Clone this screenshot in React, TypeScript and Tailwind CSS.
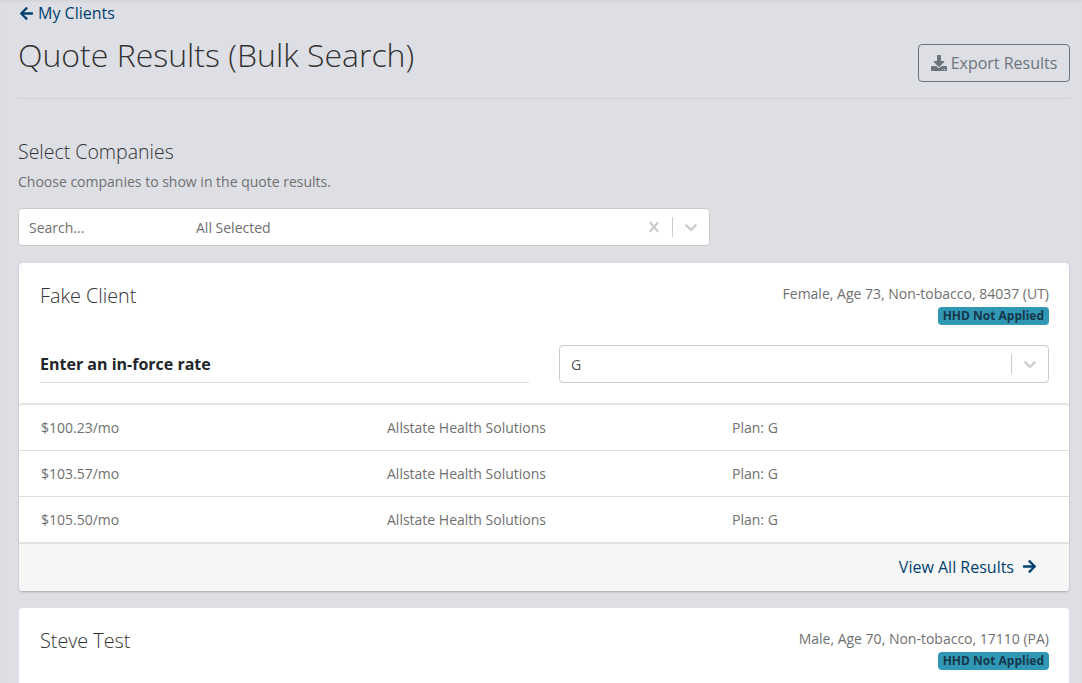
import React from "react";

const ArrowLeft = ({ className }: { className: string }) => (
  <svg viewBox="0 0 448 512" className={className} fill="currentColor">
    <path d="M257.5 445.1l-22.2 22.2c-9.4 9.4-24.6 9.4-33.9 0L7 273c-9.4-9.4-9.4-24.6 0-33.9L201.4 44.7c9.4-9.4 24.6-9.4 33.9 0l22.2 22.2c9.5 9.5 9.3 25-.4 34.3L136.6 216H424c13.3 0 24 10.7 24 24v32c0 13.3-10.7 24-24 24H136.6l120.5 114.8c9.8 9.3 10 24.8.4 34.3z" />
  </svg>
);
const ArrowRight = ({ className }: { className: string }) => (
  <svg viewBox="0 0 448 512" className={className} fill="currentColor">
    <path d="M190.5 66.9l22.2-22.2c9.4-9.4 24.6-9.4 33.9 0L441 239c9.4 9.4 9.4 24.6 0 33.9L246.6 467.3c-9.4 9.4-24.6 9.4-33.9 0l-22.2-22.2c-9.5-9.5-9.3-25 .4-34.3L311.4 296H24c-13.3 0-24-10.7-24-24v-32c0-13.3 10.7-24 24-24h287.4L190.9 101.2c-9.8-9.3-10-24.8-.4-34.3z" />
  </svg>
);
const Download = ({ className }: { className: string }) => (
  <svg viewBox="0 0 512 512" className={className} fill="currentColor">
    <path d="M216 0h80c13.3 0 24 10.7 24 24v168h87.7c17.8 0 26.7 21.5 14.1 34.1L269.7 378.3c-7.5 7.5-19.8 7.5-27.3 0L90.1 226.1c-12.6-12.6-3.7-34.1 14.1-34.1H192V24c0-13.3 10.7-24 24-24zm296 376v112c0 13.3-10.7 24-24 24H24c-13.3 0-24-10.7-24-24V376c0-13.3 10.7-24 24-24h146.7l49 49c20.1 20.1 52.5 20.1 72.6 0l49-49H488c13.3 0 24 10.7 24 24zm-124 88c0-11-9-20-20-20s-20 9-20 20 9 20 20 20 20-9 20-20zm64 0c0-11-9-20-20-20s-20 9-20 20 9 20 20 20 20-9 20-20z" />
  </svg>
);
const Chevron = () => (
  <svg viewBox="0 0 20 20" className="w-5 h-5 text-[#cccccc]" fill="currentColor">
    <path d="M4.516 7.548c0.436-0.446 1.043-0.481 1.576 0l3.908 3.747 3.908-3.747c0.533-0.481 1.141-0.446 1.574 0 0.436 0.445 0.408 1.197 0 1.615-0.406 0.418-4.695 4.502-4.695 4.502-0.217 0.223-0.502 0.335-0.787 0.335s-0.57-0.112-0.789-0.335c0 0-4.287-4.084-4.695-4.502s-0.436-1.17 0-1.615z" />
  </svg>
);
const Cross = () => (
  <svg viewBox="0 0 20 20" className="w-5 h-5 text-[#cccccc]" fill="currentColor">
    <path d="M14.348 14.849c-0.469 0.469-1.229 0.469-1.697 0l-2.651-3.030-2.651 3.029c-0.469 0.469-1.229 0.469-1.697 0-0.469-0.469-0.469-1.229 0-1.697l2.758-3.15-2.759-3.152c-0.469-0.469-0.469-1.228 0-1.697s1.228-0.469 1.697 0l2.652 3.031 2.651-3.031c0.469-0.469 1.228-0.469 1.697 0s0.469 1.229 0 1.697l-2.758 3.152 2.758 3.15c0.469 0.469 0.469 1.229 0 1.698z" />
  </svg>
);

const Badge = () => (
  <span className="inline-block bg-[#3097b5] text-[#16374a] text-[12px] leading-[18px] font-bold rounded-[4px] px-[5px] h-[18px]">
    HHD Not Applied
  </span>
);

const ClientHead = ({ name, info }: { name: string; info: string }) => (
  <div className="flex justify-between pl-[21px] pr-[20px] pt-[19px]">
    <div className="text-[19.8px] leading-[28px] font-light text-[#333333]">{name}</div>
    <div className="flex flex-col items-end">
      <div className="text-[14px] leading-[24px] text-[#707070] mb-[1px]">{info}</div>
      <Badge />
    </div>
  </div>
);

const rows = ["$100.23/mo", "$103.57/mo", "$105.50/mo"];

export default function App() {
  return (
    <div className="h-[683px] overflow-hidden bg-[#dddfe4] font-['Open_Sans',sans-serif] px-[18px] pt-[3px] shadow-[inset_0_2px_2px_rgba(0,0,0,0.04)]">
      <div className="w-[1052px]">
        <a className="flex items-center gap-[4px] text-[#014070] text-[16px] leading-[20px] ml-[1px]">
          <ArrowLeft className="w-[15px] h-[15px]" />
          My Clients
        </a>
        <div className="flex justify-between border-b border-[#d0d2d6] h-[76px] mb-[40px]">
          <h1 className="text-[32px] leading-[42px] text-[#333333] font-light mt-[11px]">Quote Results (Bulk Search)</h1>
          <button className="mt-[21px] w-[152px] h-[38px] border border-[#6c757d] rounded-[4px] text-[#6c757d] text-[16px] flex items-center justify-center gap-[4px]">
            <Download className="w-[16px] h-[16px]" />
            Export Results
          </button>
        </div>
        <h2 className="text-[19.5px] leading-[26px] text-[#333333] font-light">Select Companies</h2>
        <p className="text-[14px] leading-[18px] text-[#707070] mt-[8px]">Choose companies to show in the quote results.</p>
        <div className="mt-[17px] w-[692px] h-[38px] bg-white border border-[#cccccc] rounded-[4px] flex items-center text-[14px] text-[#707070]">
          <span className="ml-[10px] w-[167px]">Search...</span>
          <span className="flex-1">All Selected</span>
          <Cross />
          <span className="w-px h-[20px] bg-[#cccccc] ml-[8px]" />
          <span className="mx-[8px] flex"><Chevron /></span>
        </div>

        <div className="mt-[17px] ml-[1px] w-[1050px] bg-white rounded-[4px] shadow-[0_1px_2px_rgba(0,0,0,0.25)]">
          <ClientHead name="Fake Client" info="Female, Age 73, Non-tobacco, 84037 (UT)" />
          <div className="flex justify-between pl-[21px] pr-[20px] mt-[20px]">
            <div className="w-[489px] h-[38px] border-b border-[#dddddd] font-bold text-[16px] leading-[38px] text-[#212529]">
              Enter an in-force rate
            </div>
            <div className="w-[490px] h-[38px] border border-[#cccccc] rounded-[4px] flex items-center text-[14px] text-[#555555]">
              <span className="ml-[11px] flex-1">G</span>
              <span className="w-px h-[20px] bg-[#cccccc]" />
              <span className="mx-[8px] flex"><Chevron /></span>
            </div>
          </div>
          <div className="mt-[20px] rounded-[4px] border-t-2 border-[#e3e3e3]">
            {rows.map((r, i) => (
              <div key={r} className={`grid grid-cols-[346px_345px_1fr] pl-[22px] items-center text-[14px] text-[#707070] ${i === 2 ? "h-[47px] border-b-2 border-[#e3e3e3]" : "h-[46px] border-b border-[#dfdfdf]"}`}>
                <span>{r}</span>
                <span>Allstate Health Solutions</span>
                <span>Plan: G</span>
              </div>
            ))}
          </div>
          <div className="h-[47px] pb-[2px] bg-[#f6f6f6] rounded-b-[4px] flex items-center justify-end pr-[32px] gap-[8px] text-[#014070] text-[16px]">
            View All Results
            <ArrowRight className="w-[15px] h-[15px]" />
          </div>
        </div>

        <div className="mt-[17px] ml-[1px] w-[1050px] bg-white rounded-[4px] h-[200px]">
          <ClientHead name="Steve Test" info="Male, Age 70, Non-tobacco, 17110 (PA)" />
        </div>
      </div>
    </div>
  );
}
